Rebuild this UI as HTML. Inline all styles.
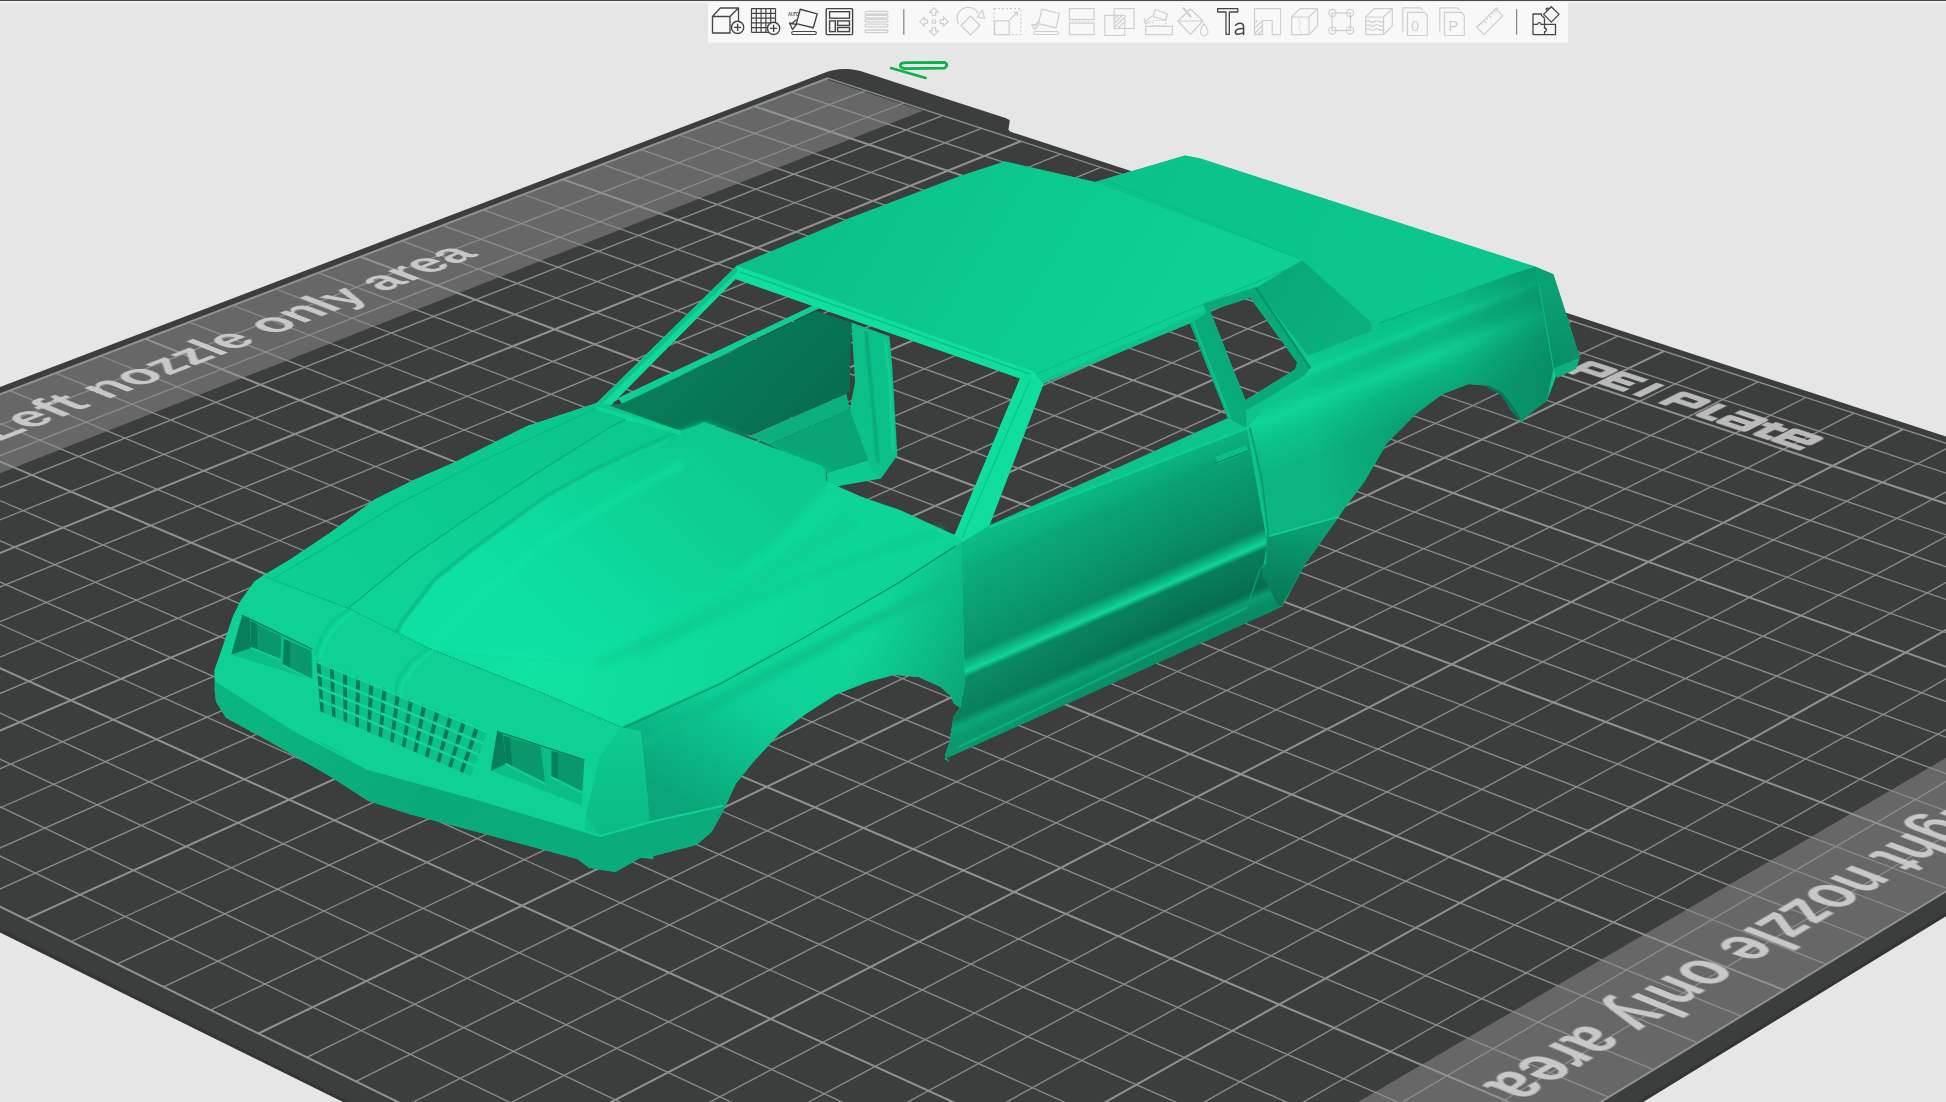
<!DOCTYPE html>
<html><head><meta charset="utf-8"><style>
html,body{margin:0;padding:0;width:1946px;height:1102px;overflow:hidden;background:#e6e6e6;font-family:"Liberation Sans",sans-serif;}
.abs{position:absolute;left:0;top:0;}
#topline{position:absolute;left:0;top:0;width:1946px;height:1px;background:#434b4d;}
#topline2{position:absolute;left:0;top:1px;width:1946px;height:2px;background:#f2f2f2;}
svg{position:absolute;left:0;top:0;}
.m{stroke:#8a8f8c;stroke-width:1.3;}
.M{stroke:#8f9491;stroke-width:2.0;}
#flat{position:absolute;left:0;top:0;width:1400.0px;height:1280.0px;transform-origin:0 0;transform:matrix3d(0.83657691,0.29716519,0,-0.0001253862,-1.02379055,0.33644074,0,-0.0001385146,0,0,1,0,827.867491,78.219669,0,1.00000000);}
.ptxt{position:absolute;color:#c9c9c9;white-space:nowrap;font-family:"Liberation Sans",sans-serif;}
</style></head><body>
<svg width="1946" height="1102" viewBox="0 0 1946 1102">
<polygon points="2452.9,601.5 1063.0,1454.4 -619.0,622.8" fill="#343535" stroke="#343535" stroke-width="2" stroke-linejoin="round" transform="translate(0,2.5)"/><polygon points="827.2,71.8 830.7,70.7 834.7,69.9 839.1,69.3 843.7,69.0 848.2,69.1 852.7,69.5 856.8,70.2 860.4,71.1 1005.5,118.1 1009.5,120.0 1009.7,121.6 1008.4,129.5 1009.7,131.3 1014.1,133.0 2452.9,601.5 1063.0,1454.4 -619.0,622.8" fill="#3c3d3d"/><polygon points="826.8,79.4 922.9,110.8 -490.5,665.7 -585.5,619.1" fill="#676767"/><polygon points="2291.1,555.9 2424.7,599.5 1065.7,1428.2 921.5,1357.4" fill="#676767"/>
</svg>
<svg width="1946" height="1102" viewBox="0 0 1946 1102">
<line x1="827.9" y1="78.2" x2="-586.6" y2="618.5" class="M"/><line x1="865.7" y1="90.6" x2="-549.3" y2="636.9" class="m"/><line x1="903.9" y1="103.0" x2="-511.5" y2="655.4" class="m"/><line x1="942.4" y1="115.6" x2="-473.2" y2="674.2" class="m"/><line x1="981.4" y1="128.3" x2="-434.5" y2="693.2" class="m"/><line x1="1020.8" y1="141.2" x2="-395.3" y2="712.5" class="M"/><line x1="1060.6" y1="154.2" x2="-355.5" y2="732.0" class="m"/><line x1="1100.8" y1="167.3" x2="-315.3" y2="751.7" class="m"/><line x1="1141.4" y1="180.6" x2="-274.6" y2="771.8" class="m"/><line x1="1182.4" y1="194.0" x2="-233.3" y2="792.0" class="m"/><line x1="1223.9" y1="207.5" x2="-191.5" y2="812.5" class="M"/><line x1="1265.8" y1="221.2" x2="-149.2" y2="833.3" class="m"/><line x1="1308.2" y1="235.0" x2="-106.3" y2="854.4" class="m"/><line x1="1351.0" y1="249.0" x2="-62.8" y2="875.8" class="m"/><line x1="1394.2" y1="263.1" x2="-18.7" y2="897.4" class="m"/><line x1="1438.0" y1="277.4" x2="25.9" y2="919.3" class="M"/><line x1="1482.2" y1="291.8" x2="71.1" y2="941.5" class="m"/><line x1="1526.9" y1="306.4" x2="117.0" y2="964.1" class="m"/><line x1="1572.1" y1="321.2" x2="163.5" y2="986.9" class="m"/><line x1="1617.8" y1="336.1" x2="210.6" y2="1010.0" class="m"/><line x1="1664.0" y1="351.2" x2="258.4" y2="1033.5" class="M"/><line x1="1710.8" y1="366.4" x2="306.9" y2="1057.3" class="m"/><line x1="1758.0" y1="381.9" x2="356.0" y2="1081.4" class="m"/><line x1="1805.8" y1="397.5" x2="405.8" y2="1105.9" class="m"/><line x1="1854.2" y1="413.2" x2="456.4" y2="1130.7" class="m"/><line x1="1903.1" y1="429.2" x2="507.7" y2="1155.9" class="M"/><line x1="1952.5" y1="445.3" x2="559.7" y2="1181.4" class="m"/><line x1="2002.5" y1="461.7" x2="612.4" y2="1207.4" class="m"/><line x1="2053.2" y1="478.2" x2="666.0" y2="1233.7" class="m"/><line x1="2104.4" y1="494.9" x2="720.3" y2="1260.3" class="m"/><line x1="2156.2" y1="511.8" x2="775.5" y2="1287.4" class="M"/><line x1="2208.6" y1="528.9" x2="831.5" y2="1314.9" class="m"/><line x1="2261.7" y1="546.3" x2="888.3" y2="1342.8" class="m"/><line x1="2315.4" y1="563.8" x2="946.0" y2="1371.2" class="m"/><line x1="2369.7" y1="581.5" x2="1004.6" y2="1399.9" class="m"/><line x1="2424.7" y1="599.5" x2="1064.1" y2="1429.2" class="M"/><line x1="827.9" y1="78.2" x2="2424.7" y2="599.5" class="m"/><line x1="791.3" y1="92.2" x2="2391.1" y2="620.0" class="m"/><line x1="754.3" y1="106.3" x2="2357.0" y2="640.7" class="M"/><line x1="716.9" y1="120.6" x2="2322.5" y2="661.8" class="m"/><line x1="679.1" y1="135.0" x2="2287.5" y2="683.1" class="m"/><line x1="640.9" y1="149.7" x2="2252.0" y2="704.8" class="m"/><line x1="602.2" y1="164.4" x2="2216.0" y2="726.7" class="m"/><line x1="563.0" y1="179.4" x2="2179.5" y2="749.0" class="M"/><line x1="523.5" y1="194.5" x2="2142.5" y2="771.5" class="m"/><line x1="483.4" y1="209.8" x2="2105.0" y2="794.4" class="m"/><line x1="442.9" y1="225.3" x2="2066.9" y2="817.7" class="m"/><line x1="401.9" y1="240.9" x2="2028.3" y2="841.2" class="m"/><line x1="360.4" y1="256.8" x2="1989.1" y2="865.1" class="M"/><line x1="318.4" y1="272.8" x2="1949.3" y2="889.4" class="m"/><line x1="275.9" y1="289.0" x2="1908.9" y2="914.0" class="m"/><line x1="233.0" y1="305.5" x2="1867.9" y2="939.0" class="m"/><line x1="189.4" y1="322.1" x2="1826.4" y2="964.3" class="m"/><line x1="145.4" y1="338.9" x2="1784.1" y2="990.1" class="M"/><line x1="100.8" y1="356.0" x2="1741.3" y2="1016.2" class="m"/><line x1="55.6" y1="373.2" x2="1697.7" y2="1042.8" class="m"/><line x1="9.9" y1="390.7" x2="1653.5" y2="1069.7" class="m"/><line x1="-36.3" y1="408.3" x2="1608.6" y2="1097.1" class="m"/><line x1="-83.2" y1="426.2" x2="1563.0" y2="1124.9" class="M"/><line x1="-130.7" y1="444.4" x2="1516.7" y2="1153.2" class="m"/><line x1="-178.7" y1="462.7" x2="1469.6" y2="1181.9" class="m"/><line x1="-227.4" y1="481.3" x2="1421.8" y2="1211.0" class="m"/><line x1="-276.7" y1="500.2" x2="1373.2" y2="1240.7" class="m"/><line x1="-326.7" y1="519.3" x2="1323.8" y2="1270.8" class="M"/><line x1="-377.3" y1="538.6" x2="1273.6" y2="1301.4" class="m"/><line x1="-428.6" y1="558.2" x2="1222.5" y2="1332.5" class="m"/><line x1="-480.6" y1="578.0" x2="1170.6" y2="1364.2" class="m"/><line x1="-533.2" y1="598.1" x2="1117.8" y2="1396.4" class="m"/><line x1="-586.6" y1="618.5" x2="1064.1" y2="1429.2" class="M"/>
</svg>
<div id="flat"><svg width="1400" height="1280" style="position:absolute;left:0;top:0;overflow:visible">
<text transform="translate(61.2,860.8) rotate(-90) scale(0.887,1)" font-size="50.4" font-weight="bold" fill="#c8c8c8" font-family="Liberation Sans">Left nozzle only area</text>
<text transform="translate(1340.8000000000002,403.6) rotate(90) scale(0.887,1)" font-size="50.4" font-weight="bold" fill="#c8c8c8" font-family="Liberation Sans">Right nozzle only area</text>
<path d="M775.00,74.00 L775.00,49.80 L793.80,49.80 L793.80,62.00 L775.00,62.00 M822.00,49.80 L802.20,49.80 L802.20,71.00 L822.00,71.00 M802.20,60.40 L819.20,60.40 M832.60,74.00 L832.60,46.80 M854.20,74.00 L854.20,49.80 L873.00,49.80 L873.00,62.00 L854.20,62.00 M885.00,46.80 L885.00,71.00 L896.80,71.00 M899.60,49.80 L920.60,49.80 L920.60,71.00 L901.80,71.00 L901.80,60.40 L920.60,60.40 M932.80,46.80 L932.80,71.00 L943.60,71.00 M924.80,54.00 L942.80,54.00 M969.20,71.00 L947.40,71.00 L947.40,49.80 L966.20,49.80 L966.20,60.40 L947.40,60.40" fill="none" stroke="#bababa" stroke-width="7.00" stroke-linejoin="round" stroke-linecap="butt"/>
</svg>
</div>
<svg width="1946" height="1102" viewBox="0 0 1946 1102">
<defs><filter id="b1" x="-20%" y="-20%" width="140%" height="140%"><feGaussianBlur stdDeviation="1.2"/></filter><filter id="b3" x="-20%" y="-20%" width="140%" height="140%"><feGaussianBlur stdDeviation="3"/></filter><filter id="b6" x="-30%" y="-30%" width="160%" height="160%"><feGaussianBlur stdDeviation="6"/></filter><linearGradient id="gint" gradientUnits="userSpaceOnUse" x1="700" y1="330" x2="800" y2="430"><stop offset="0" stop-color="#077d58"/><stop offset="1" stop-color="#076e4f"/></linearGradient><linearGradient id="groof" gradientUnits="userSpaceOnUse" x1="820" y1="190" x2="1120" y2="380"><stop offset="0" stop-color="#0bc189"/><stop offset="0.5" stop-color="#0cc98d"/><stop offset="1" stop-color="#0dd092"/></linearGradient><linearGradient id="gtrunk" gradientUnits="userSpaceOnUse" x1="1150" y1="170" x2="1450" y2="300"><stop offset="0" stop-color="#0bc28a"/><stop offset="1" stop-color="#0cc78d"/></linearGradient><linearGradient id="gsail" gradientUnits="userSpaceOnUse" x1="1280" y1="280" x2="1360" y2="340"><stop offset="0" stop-color="#0aa97a"/><stop offset="1" stop-color="#0bb07e"/></linearGradient><linearGradient id="grq" gradientUnits="userSpaceOnUse" x1="1394.6" y1="322" x2="1430.7" y2="415.3"><stop offset="0" stop-color="#0bbf88"/><stop offset="0.1" stop-color="#0bc58b"/><stop offset="0.15" stop-color="#0ecf94"/><stop offset="0.22" stop-color="#0bb984"/><stop offset="0.3" stop-color="#0bb782"/><stop offset="0.45" stop-color="#0ed094"/><stop offset="0.65" stop-color="#0bb481"/><stop offset="1" stop-color="#0a9f72"/></linearGradient><linearGradient id="grqh" gradientUnits="userSpaceOnUse" x1="1300" y1="380" x2="1550" y2="330"><stop offset="0" stop-color="#10dc9d" stop-opacity="0.35"/><stop offset="0.45" stop-color="#0cc48b" stop-opacity="0"/><stop offset="0.7" stop-color="#077a56" stop-opacity="0.15"/><stop offset="1" stop-color="#077a56" stop-opacity="0.55"/></linearGradient><linearGradient id="grend" gradientUnits="userSpaceOnUse" x1="1550" y1="280" x2="1560" y2="370"><stop offset="0" stop-color="#0aa275"/><stop offset="1" stop-color="#098e65"/></linearGradient><linearGradient id="gql" gradientUnits="userSpaceOnUse" x1="1290" y1="525" x2="1280" y2="605"><stop offset="0" stop-color="#0a9f72"/><stop offset="1" stop-color="#087553"/></linearGradient><linearGradient id="gdoor" gradientUnits="userSpaceOnUse" x1="1100" y1="481" x2="1171" y2="646"><stop offset="0" stop-color="#0bb682"/><stop offset="0.1" stop-color="#0aae7c"/><stop offset="0.16" stop-color="#0aa275"/><stop offset="0.4" stop-color="#09936a"/><stop offset="0.6" stop-color="#08845e"/><stop offset="0.645" stop-color="#0ab27f"/><stop offset="0.68" stop-color="#10d598"/><stop offset="0.71" stop-color="#087e59"/><stop offset="0.9" stop-color="#076e4f"/><stop offset="0.945" stop-color="#0a9d70"/><stop offset="1" stop-color="#088c63"/></linearGradient><linearGradient id="gdoorh" gradientUnits="userSpaceOnUse" x1="960" y1="600" x2="1180" y2="600"><stop offset="0" stop-color="#10d89b" stop-opacity="0.18"/><stop offset="1" stop-color="#10d89b" stop-opacity="0"/></linearGradient><linearGradient id="ghood" gradientUnits="userSpaceOnUse" x1="380" y1="480" x2="900" y2="600"><stop offset="0" stop-color="#0ed498"/><stop offset="0.35" stop-color="#10e2a2"/><stop offset="0.7" stop-color="#0ed99b"/><stop offset="1" stop-color="#0dd396"/></linearGradient><linearGradient id="gfl" gradientUnits="userSpaceOnUse" x1="300" y1="590" x2="600" y2="420"><stop offset="0" stop-color="#0dcf93"/><stop offset="1" stop-color="#0bc68c"/></linearGradient><linearGradient id="gstrip" gradientUnits="userSpaceOnUse" x1="380" y1="600" x2="640" y2="440"><stop offset="0" stop-color="#0ed397"/><stop offset="1" stop-color="#0cc98e"/></linearGradient><linearGradient id="gbul" gradientUnits="userSpaceOnUse" x1="760" y1="440" x2="560" y2="660"><stop offset="0" stop-color="#0cc98e"/><stop offset="0.35" stop-color="#0dcf93"/><stop offset="0.75" stop-color="#0fdc9e"/><stop offset="1" stop-color="#10e1a1"/></linearGradient><linearGradient id="gfend" gradientUnits="userSpaceOnUse" x1="810" y1="620" x2="700" y2="810"><stop offset="0" stop-color="#0ed699"/><stop offset="0.45" stop-color="#0dd096"/><stop offset="1" stop-color="#0aa679"/></linearGradient><linearGradient id="gfendh" gradientUnits="userSpaceOnUse" x1="860" y1="640" x2="965" y2="690"><stop offset="0" stop-color="#0a9f72" stop-opacity="0"/><stop offset="1" stop-color="#0a9f72" stop-opacity="0.85"/></linearGradient><linearGradient id="gcorner" gradientUnits="userSpaceOnUse" x1="620" y1="730" x2="630" y2="860"><stop offset="0" stop-color="#0dcb90"/><stop offset="1" stop-color="#0bb682"/></linearGradient><linearGradient id="gbump" gradientUnits="userSpaceOnUse" x1="260" y1="720" x2="600" y2="860"><stop offset="0" stop-color="#0bb480"/><stop offset="0.5" stop-color="#0aa97a"/><stop offset="1" stop-color="#0aac7c"/></linearGradient></defs><path d="M736.8,265.8 L850.0,218.0 L961.8,175.6 L1005.0,161.6 L1095.0,182.0 L1185.0,155.4 L1200.4,158.5 L1535.5,266.8 L1553.4,274.3 L1566.7,315.5 L1579.8,358.0 L1556.9,374.3 L1547.1,400.5 L1534.0,410.3 L1521.0,421.7 L1511.2,410.3 L1501.4,394.0 L1488.3,385.8 L1468.7,384.1 L1442.5,394.0 L1416.4,413.5 L1387.0,443.0 L1364.1,482.1 L1344.5,508.3 L1338.0,518.1 L1305.3,563.8 L1282.5,606.3 L944.5,759.0 L949.3,762.0 L944.9,755.4 L949.3,742.4 L953.6,716.2 L960.1,707.5 L953.6,703.2 L951.4,696.6 L940.5,686.8 L918.8,677.0 L894.8,674.8 L868.7,681.4 L836.0,694.4 L805.5,714.0 L779.4,733.6 L753.2,762.0 L735.8,783.7 L722.8,812.0 L711.9,831.6 L696.6,844.7 L655.2,855.6 L640.0,857.8 L615.2,872.1 L589.0,867.8 L577.5,859.0 L470.0,830.0 L410.0,814.3 L368.0,800.7 L330.0,776.2 L270.0,741.8 L226.0,717.8 L216.0,701.8 L214.7,690.0 L214.5,670.3 L221.8,649.6 L232.7,616.9 L240.8,600.6 L254.5,581.5 L262.6,576.0 L289.9,559.7 L330.7,532.5 L374.3,499.8 L412.4,480.7 L456.0,461.7 L526.8,426.3 L597.0,403.0 Z M735.6,279.0 L1020.0,378.4 L954.7,534.9 L611.8,404.3 Z M1043.7,383.8 L1190.0,323.6 L1227.7,418.0 L989.5,525.3 L1037.8,390.9 Z M1210.0,310.7 L1250.2,297.7 L1297.3,362.6 L1295.0,369.6 L1245.4,400.3 Z" fill="#0cc48c" fill-rule="evenodd"/>
<path d="M618.0,398.0 L816.0,304.0 L824.0,306.0 L622.0,404.0 Z" fill="#0dcf93" />
<path d="M636.0,396.0 L780.0,330.0 L784.0,333.0 L640.0,400.0 Z" fill="#0cc58c" />
<path d="M609.6,405.4 L624.0,403.0 L816.0,311.0 L851.3,322.6 L849.7,392.0 L747.7,435.8 L705.0,422.6 L680.3,430.8 Z" fill="url(#gint)" />
<path d="M749.4,435.8 L846.4,393.8 L849.7,409.5 L769.0,444.8 Z" fill="#0bb07e" />
<path d="M769.0,444.8 L849.7,409.5 L872.7,458.8 L826.7,473.0 Z" fill="#0aa577" />
<path d="M826.7,473.0 L872.7,458.8 L881.0,478.5 L828.0,488.0 Z" fill="#0ccb90" />
<path d="M851.3,322.6 L889.4,336.2 L892.0,363.0 L897.4,455.5 L881.0,478.5 L872.0,470.0 L849.7,409.5 L855.0,382.0 Z" fill="#0cc08a" />
<path d="M866.0,332.0 L872.0,395.0 L878.0,462.0" fill="none" stroke="#0a9c70" stroke-width="2.2" stroke-linejoin="round" stroke-linecap="round" filter="url(#b1)"/>
<path d="M885.0,340.0 L890.0,380.0 L893.0,450.0" fill="none" stroke="#10da9c" stroke-width="2" stroke-linejoin="round" stroke-linecap="round" filter="url(#b1)"/>
<path d="M736.8,265.8 L850.0,218.0 L961.8,175.6 L1005.0,161.6 L1095.0,182.0 L1302.2,260.2 L1256.0,288.0 L1043.0,380.0 L1033.7,371.6 Z" fill="url(#groof)" />
<path d="M736.8,265.8 L1033.7,371.6 L1020.0,378.4 L735.6,279.0 Z" fill="#10de9f" />
<path d="M740.0,272.0 L1030.0,374.0" fill="none" stroke="#0bb883" stroke-width="1.2" stroke-linejoin="round" stroke-linecap="round" />
<path d="M1036.0,374.0 L1300.0,264.0" fill="none" stroke="#0bbd87" stroke-width="1.3" stroke-linejoin="round" stroke-linecap="round" />
<path d="M1095.0,182.0 L1185.0,155.4 L1200.4,158.5 L1535.5,266.8 L1516.1,272.8 L1377.5,324.2 L1302.2,260.2 Z" fill="url(#gtrunk)" />
<path d="M1105.0,180.0 L1300.0,259.0" fill="none" stroke="#0bb480" stroke-width="1.0" stroke-linejoin="round" stroke-linecap="round" stroke-dasharray="2,1.5"/>
<path d="M1380.0,323.0 L1516.0,273.0" fill="none" stroke="#0a9f72" stroke-width="1.2" stroke-linejoin="round" stroke-linecap="round" />
<path d="M1302.2,260.2 L1370.7,322.0 L1372.0,331.0 L1308.3,355.8 L1256.0,288.0 Z" fill="url(#gsail)" />
<path d="M1246.8,428.0 L1297.0,369.6 L1308.3,355.8 L1372.0,331.0 L1377.5,324.2 L1516.1,272.8 L1535.5,266.8 L1538.5,281.7 L1553.4,368.2 L1547.1,400.5 L1534.0,410.3 L1521.0,421.7 L1511.2,410.3 L1501.4,394.0 L1488.3,385.8 L1468.7,384.1 L1442.5,394.0 L1416.4,413.5 L1387.0,443.0 L1364.1,482.1 L1344.5,508.3 L1337.8,516.9 L1267.9,535.0 L1251.0,429.0 Z" fill="url(#grq)" />
<path d="M1246.8,428.0 L1297.0,369.6 L1308.3,355.8 L1372.0,331.0 L1377.5,324.2 L1516.1,272.8 L1535.5,266.8 L1538.5,281.7 L1553.4,368.2 L1547.1,400.5 L1534.0,410.3 L1521.0,421.7 L1511.2,410.3 L1501.4,394.0 L1488.3,385.8 L1468.7,384.1 L1442.5,394.0 L1416.4,413.5 L1387.0,443.0 L1364.1,482.1 L1344.5,508.3 L1337.8,516.9 L1267.9,535.0 L1251.0,429.0 Z" fill="url(#grqh)" />
<path d="M1535.5,266.8 L1553.4,274.3 L1566.7,315.5 L1579.8,358.0 L1575.0,368.0 L1556.9,374.3 L1553.4,368.2 L1538.5,281.7 Z" fill="url(#grend)" />
<path d="M1538.5,281.7 L1553.4,368.2" fill="none" stroke="#0bb783" stroke-width="1.2" stroke-linejoin="round" stroke-linecap="round" />
<path d="M1553.4,368.2 L1579.8,358.0 L1576.0,369.0 L1557.0,378.0 Z" fill="#0bb07e" />
<path d="M1488.0,386.5 L1501.0,393.5 L1511.0,406.0 L1519.0,418.0" fill="none" stroke="#087753" stroke-width="3" stroke-linejoin="round" stroke-linecap="round" />
<path d="M1267.9,535.0 L1337.8,516.9 L1344.5,508.3 L1338.0,518.1 L1311.9,553.8 L1305.3,563.8 L1284.0,601.8 L1282.5,606.3 L1246.0,609.8 L1260.0,569.8 L1266.0,563.8 Z" fill="url(#gql)" />
<path d="M1269.0,536.0 L1338.0,517.0" fill="none" stroke="#0fd195" stroke-width="1.8" stroke-linejoin="round" stroke-linecap="round" />
<path d="M961.0,542.0 L989.5,526.1 L1246.8,428.0 L1267.0,542.0 L1262.0,575.0 L1279.5,607.8 L944.5,759.0 L949.3,742.4 L953.6,716.2 L960.1,707.5 L964.9,681.3 Z" fill="url(#gdoor)" />
<path d="M961.0,542.0 L989.5,526.1 L1246.8,428.0 L1267.0,542.0 L1262.0,575.0 L1279.5,607.8 L944.5,759.0 L949.3,742.4 L953.6,716.2 L960.1,707.5 L964.9,681.3 Z" fill="url(#gdoorh)" />
<path d="M990.0,527.0 L1248.0,428.0" fill="none" stroke="#0dcf93" stroke-width="2.4" stroke-linejoin="round" stroke-linecap="round" />
<path d="M1250.0,428.0 L1262.0,480.0 L1267.9,530.0 L1266.0,563.8 L1260.0,569.8 L1246.0,609.8" fill="none" stroke="#0a9a6e" stroke-width="1.6" stroke-linejoin="round" stroke-linecap="round" />
<path d="M959.0,747.0 L1246.0,608.0" fill="none" stroke="#0bb07e" stroke-width="2" stroke-linejoin="round" stroke-linecap="round" />
<path d="M1215.0,457.0 L1246.0,445.0 L1249.0,452.0 L1218.0,464.0 Z" fill="#0bbd87" />
<path d="M1216.0,463.0 L1248.0,451.0" fill="none" stroke="#087f5b" stroke-width="1.2" stroke-linejoin="round" stroke-linecap="round" />
<path d="M597.0,403.0 L640.0,420.0 L677.0,436.0 L704.0,422.0 L822.0,466.0 L826.0,481.0 L962.5,542.0 L900.0,580.0 L800.0,636.0 L720.0,682.0 L621.3,727.1 L536.8,690.7 L470.0,663.9 L427.7,647.9 L349.8,609.0 L293.9,590.0 L262.6,576.0 L289.9,559.7 L330.7,532.5 L374.3,499.8 L412.4,480.7 L456.0,461.7 L526.8,426.3 Z" fill="url(#ghood)" />
<path d="M262.6,576.0 L289.9,559.7 L330.7,532.5 L374.3,499.8 L412.4,480.7 L456.0,461.7 L526.8,426.3 L597.0,403.0 L625.0,413.0 L625.0,420.0 L609.8,427.6 L546.2,467.0 L470.0,516.6 L412.4,556.0 L347.1,609.1 L293.9,590.0 Z" fill="url(#gfl)" />
<path d="M347.1,609.1 L412.4,556.0 L470.0,516.6 L546.2,467.0 L609.8,427.6 L625.0,420.0 L680.3,430.8 L680.3,430.8 L630.0,453.0 L597.1,468.3 L546.2,496.2 L470.0,551.0 L434.2,580.0 L401.6,622.0 L395.0,636.0 Z" fill="url(#gstrip)" />
<path d="M273.0,578.6 L330.0,545.0 L400.0,503.0 L480.0,462.0 L595.0,408.7" fill="none" stroke="#0bb682" stroke-width="1.1" stroke-linejoin="round" stroke-linecap="round" />
<path d="M347.1,609.1 L412.4,556.0 L470.0,516.6 L546.2,467.0 L609.8,427.6 L625.0,420.0" fill="none" stroke="#0aa97a" stroke-width="1.1" stroke-linejoin="round" stroke-linecap="round" />
<path d="M680.3,430.8 L705.0,422.6 L825.0,468.7 L826.7,485.1 L790.0,530.0 L720.0,585.0 L640.0,630.0 L560.0,660.0 L430.0,650.0 L395.0,636.0 L401.6,622.0 L434.2,580.0 L470.0,551.0 L546.2,496.2 L597.1,468.3 L630.0,453.0 Z" fill="url(#gbul)" filter="url(#b3)"/>
<path d="M680.3,430.8 L705.0,422.6 L825.0,468.7 L826.7,485.1 L800.0,490.0 L700.0,448.0 L660.0,448.0 Z" fill="#0cc98e" />
<path d="M395.0,636.0 L401.6,622.0 L434.2,580.0 L470.0,551.0 L546.2,496.2 L597.1,468.3 L630.0,453.0 L680.3,430.8" fill="none" stroke="#0ab583" stroke-width="3" stroke-linejoin="round" stroke-linecap="round" filter="url(#b1)"/>
<path d="M420.0,662.0 L470.0,604.0 L540.0,545.0 L610.0,503.0 L680.0,465.0" fill="none" stroke="#11e4a4" stroke-width="9" stroke-linejoin="round" stroke-linecap="round" opacity="0.5" filter="url(#b3)"/>
<path d="M850.0,520.0 L760.0,580.0 L640.0,650.0" fill="none" stroke="#0cc48b" stroke-width="14" stroke-linejoin="round" stroke-linecap="round" opacity="0.5" filter="url(#b6)"/>
<path d="M621.3,727.1 L720.0,682.0 L800.0,636.0 L900.0,580.0 L962.5,542.0 L961.0,542.0 L964.9,681.3 L960.1,707.5 L953.6,703.2 L951.4,696.6 L940.5,686.8 L918.8,677.0 L894.8,674.8 L868.7,681.4 L836.0,694.4 L805.5,714.0 L779.4,733.6 L753.2,762.0 L735.8,783.7 L722.8,812.0 L711.9,831.6 L696.6,844.7 L655.2,855.6 L640.0,857.8 L615.2,872.1 L599.6,835.0 L586.0,814.0 L599.6,757.6 Z" fill="url(#gfend)" />
<path d="M900.0,580.0 L962.5,542.0 L961.0,542.0 L964.9,681.3 L960.1,707.5 L953.6,703.2 L951.4,696.6 L940.5,686.8 L918.8,677.0 L894.8,674.8 L868.7,681.4 L836.0,694.4 L840.0,620.0 Z" fill="url(#gfendh)" />
<path d="M636.0,748.0 L740.0,690.0 L860.0,626.0 L962.0,578.0" fill="none" stroke="#0bb985" stroke-width="8" stroke-linejoin="round" stroke-linecap="round" opacity="0.8" filter="url(#b3)"/>
<path d="M624.0,727.7 L720.0,684.0 L800.0,640.0 L900.0,582.0 L955.4,546.0" fill="none" stroke="#098f66" stroke-width="1.2" stroke-linejoin="round" stroke-linecap="round" />
<path d="M600.0,662.0 L700.0,622.0 L840.0,564.0 L940.0,530.0" fill="none" stroke="#0cc48b" stroke-width="8" stroke-linejoin="round" stroke-linecap="round" opacity="0.45" filter="url(#b3)"/>
<path d="M641.4,731.3 L648.0,800.0 L653.0,859.0" fill="none" stroke="#0aa476" stroke-width="1.3" stroke-linejoin="round" stroke-linecap="round" />
<path d="M262.6,576.0 L293.9,590.0 L349.8,609.0 L427.7,647.9 L470.0,663.9 L536.8,690.7 L621.3,727.1 L599.6,757.6 L586.5,814.2 L584.3,831.6 L470.0,797.0 L410.0,781.0 L368.0,769.0 L330.0,747.0 L290.0,728.0 L250.0,703.0 L215.0,680.0 L214.5,670.3 L221.8,649.6 L232.7,616.9 L240.8,600.6 L254.5,581.5 Z" fill="#0fd195" />
<path d="M621.3,727.1 L641.4,731.3 L648.0,800.0 L653.0,859.0 L640.0,857.8 L615.2,872.1 L599.6,835.0 L586.0,814.0 L599.6,757.6 Z" fill="url(#gcorner)" />
<path d="M349.8,609.0 L333.0,620.0 L321.8,635.9 L315.0,655.0" fill="none" stroke="#0bb984" stroke-width="1.4" stroke-linejoin="round" stroke-linecap="round" filter="url(#b1)"/>
<path d="M353.0,612.0 L337.0,625.0 L326.0,640.0 L320.0,657.0" fill="none" stroke="#12e3a3" stroke-width="1.6" stroke-linejoin="round" stroke-linecap="round" filter="url(#b1)"/>
<path d="M427.7,647.9 L410.0,662.0 L397.7,679.9 L393.7,701.8" fill="none" stroke="#0bb984" stroke-width="1.4" stroke-linejoin="round" stroke-linecap="round" filter="url(#b1)"/>
<path d="M432.0,651.0 L415.0,666.0 L403.0,683.0 L399.0,704.0" fill="none" stroke="#12e3a3" stroke-width="1.6" stroke-linejoin="round" stroke-linecap="round" filter="url(#b1)"/>
<path d="M242.2,615.4 L312.1,649.0 L313.0,679.9 L231.3,654.5 Z" fill="#0bbd87" />
<path d="M242.2,615.4 L249.5,618.0 L251.3,648.1 L231.3,654.5 Z" fill="#087f5b" />
<path d="M250.4,620.9 L281.3,636.3 L280.4,659.9 L251.3,648.1 Z" fill="#09976b" />
<path d="M250.4,620.9 L257.0,624.0 L257.5,651.0 L251.3,648.1 Z" fill="#07805a" />
<path d="M284.0,639.0 L311.2,650.8 L312.1,679.9 L283.1,665.4 Z" fill="#09976b" />
<path d="M284.0,639.0 L290.0,641.5 L290.5,668.5 L283.1,665.4 Z" fill="#07805a" />
<path d="M251.3,648.1 L280.4,659.9" fill="none" stroke="#0ecf94" stroke-width="2" stroke-linejoin="round" stroke-linecap="round" />
<path d="M283.1,665.4 L312.1,679.9" fill="none" stroke="#0ecf94" stroke-width="2" stroke-linejoin="round" stroke-linecap="round" />
<path d="M242.2,615.4 L312.1,649.0" fill="none" stroke="#087f5b" stroke-width="1.3" stroke-linejoin="round" stroke-linecap="round" />
<path d="M316.0,660.0 L488.0,731.0 L471.0,776.0 L320.0,711.0 Z" fill="#0cc18a" />
<path d="M316.5,660.2 L320.5,661.9 L321.4,674.6 L317.5,673.0 Z M317.5,673.0 L321.4,674.6 L322.2,687.3 L318.5,685.7 Z M318.5,685.7 L322.2,687.3 L323.1,700.0 L319.5,698.5 Z M319.5,698.5 L323.1,700.0 L323.9,712.7 L320.5,711.2 Z M329.8,665.7 L333.7,667.3 L334.2,679.9 L330.3,678.3 Z M330.3,678.3 L334.2,679.9 L334.6,692.5 L330.9,690.9 Z M330.9,690.9 L334.6,692.5 L335.1,705.1 L331.5,703.6 Z M331.5,703.6 L335.1,705.1 L335.6,717.7 L332.1,716.2 Z M343.0,671.1 L347.0,672.8 L347.0,685.3 L343.2,683.7 Z M343.2,683.7 L347.0,685.3 L347.1,697.7 L343.3,696.2 Z M343.3,696.2 L347.1,697.7 L347.1,710.2 L343.5,708.7 Z M343.5,708.7 L347.1,710.2 L347.2,722.7 L343.7,721.2 Z M356.2,676.6 L360.2,678.2 L359.8,690.6 L356.0,689.0 Z M356.0,689.0 L359.8,690.6 L359.5,703.0 L355.8,701.4 Z M355.8,701.4 L359.5,703.0 L359.1,715.3 L355.5,713.8 Z M355.5,713.8 L359.1,715.3 L358.8,727.7 L355.3,726.2 Z M369.5,682.1 L373.4,683.7 L372.7,696.0 L368.8,694.3 Z M368.8,694.3 L372.7,696.0 L371.9,708.2 L368.2,706.6 Z M368.2,706.6 L371.9,708.2 L371.2,720.5 L367.6,718.9 Z M367.6,718.9 L371.2,720.5 L370.4,732.7 L366.9,731.2 Z M382.7,687.5 L386.7,689.2 L385.5,701.3 L381.6,699.7 Z M381.6,699.7 L385.5,701.3 L384.3,713.4 L380.6,711.9 Z M380.6,711.9 L384.3,713.4 L383.2,725.6 L379.6,724.0 Z M379.6,724.0 L383.2,725.6 L382.0,737.7 L378.5,736.2 Z M395.9,693.0 L399.9,694.6 L398.3,706.6 L394.5,705.0 Z M394.5,705.0 L398.3,706.6 L396.8,718.7 L393.0,717.1 Z M393.0,717.1 L396.8,718.7 L395.2,730.7 L391.6,729.1 Z M391.6,729.1 L395.2,730.7 L393.6,742.7 L390.2,741.2 Z M409.1,698.4 L413.1,700.1 L411.1,712.0 L407.3,710.4 Z M407.3,710.4 L411.1,712.0 L409.2,723.9 L405.5,722.3 Z M405.5,722.3 L409.2,723.9 L407.2,735.8 L403.6,734.3 Z M403.6,734.3 L407.2,735.8 L405.3,747.7 L401.8,746.2 Z M422.4,703.9 L426.3,705.5 L424.0,717.3 L420.1,715.7 Z M420.1,715.7 L424.0,717.3 L421.6,729.1 L417.9,727.6 Z M417.9,727.6 L421.6,729.1 L419.2,740.9 L415.6,739.4 Z M415.6,739.4 L419.2,740.9 L416.9,752.7 L413.4,751.2 Z M435.6,709.4 L439.6,711.0 L436.8,722.7 L433.0,721.1 Z M433.0,721.1 L436.8,722.7 L434.0,734.4 L430.3,732.8 Z M430.3,732.8 L434.0,734.4 L431.3,746.0 L427.7,744.5 Z M427.7,744.5 L431.3,746.0 L428.5,757.7 L425.0,756.2 Z M448.8,714.8 L452.8,716.5 L449.6,728.0 L445.8,726.4 Z M445.8,726.4 L449.6,728.0 L446.5,739.6 L442.7,738.0 Z M442.7,738.0 L446.5,739.6 L443.3,751.1 L439.7,749.6 Z M439.7,749.6 L443.3,751.1 L440.1,762.7 L436.6,761.2 Z M462.1,720.3 L466.0,721.9 L462.5,733.4 L458.6,731.8 Z M458.6,731.8 L462.5,733.4 L458.9,744.8 L455.2,743.2 Z M455.2,743.2 L458.9,744.8 L455.3,756.3 L451.7,754.7 Z M451.7,754.7 L455.3,756.3 L451.7,767.7 L448.2,766.2 Z M475.3,725.8 L479.3,727.4 L475.3,738.7 L471.4,737.1 Z M471.4,737.1 L475.3,738.7 L471.3,750.0 L467.6,748.5 Z M467.6,748.5 L471.3,750.0 L467.3,761.4 L463.7,759.8 Z M463.7,759.8 L467.3,761.4 L463.3,772.7 L459.8,771.2 Z" fill="#08795a"/>
<path d="M316.5,660.2 L329.2,665.5 L329.4,668.0 L316.7,663.0 Z M317.5,673.0 L329.8,678.1 L329.9,680.6 L317.7,675.8 Z M318.5,685.7 L330.4,690.7 L330.5,693.3 L318.7,688.5 Z M319.5,698.5 L331.0,703.4 L331.1,705.9 L319.7,701.3 Z M329.8,665.7 L342.5,670.9 L342.5,673.4 L329.9,668.5 Z M330.3,678.3 L342.7,683.4 L342.7,685.9 L330.5,681.1 Z M330.9,690.9 L342.8,696.0 L342.9,698.5 L331.0,693.7 Z M331.5,703.6 L343.0,708.5 L343.1,711.0 L331.6,706.3 Z M343.0,671.1 L355.7,676.4 L355.6,678.9 L343.0,673.9 Z M343.2,683.7 L355.5,688.8 L355.4,691.3 L343.2,686.4 Z M343.3,696.2 L355.3,701.2 L355.2,703.7 L343.4,698.9 Z M343.5,708.7 L355.1,713.6 L355.0,716.1 L343.6,711.4 Z M356.2,676.6 L368.9,681.8 L368.8,684.3 L356.2,679.3 Z M356.0,689.0 L368.3,694.1 L368.2,696.6 L355.9,691.7 Z M355.8,701.4 L367.7,706.4 L367.6,708.9 L355.7,704.1 Z M355.5,713.8 L367.1,718.7 L367.0,721.2 L355.5,716.5 Z M369.5,682.1 L382.2,687.3 L382.0,689.7 L369.3,684.8 Z M368.8,694.3 L381.1,699.5 L380.9,701.9 L368.7,697.1 Z M368.2,706.6 L380.1,711.7 L379.9,714.1 L368.1,709.3 Z M367.6,718.9 L379.1,723.8 L378.9,726.3 L367.4,721.6 Z M382.7,687.5 L395.4,692.8 L395.1,695.2 L382.5,690.2 Z M381.6,699.7 L394.0,704.8 L393.7,707.2 L381.4,702.4 Z M380.6,711.9 L392.5,716.9 L392.3,719.3 L380.4,714.5 Z M379.6,724.0 L391.1,728.9 L390.8,731.4 L379.3,726.7 Z M395.9,693.0 L408.6,698.2 L408.2,700.6 L395.6,695.6 Z M394.5,705.0 L406.8,710.2 L406.4,712.6 L394.2,707.7 Z M393.0,717.1 L405.0,722.1 L404.6,724.5 L392.7,719.7 Z M391.6,729.1 L403.1,734.1 L402.8,736.4 L391.3,731.8 Z M409.1,698.4 L421.8,703.7 L421.4,706.1 L408.7,701.1 Z M407.3,710.4 L419.6,715.5 L419.2,717.9 L406.9,713.0 Z M405.5,722.3 L417.4,727.3 L416.9,729.7 L405.1,725.0 Z M403.6,734.3 L415.2,739.2 L414.7,741.5 L403.2,736.9 Z M422.4,703.9 L435.1,709.2 L434.5,711.5 L421.9,706.5 Z M420.1,715.7 L432.4,720.9 L431.9,723.2 L419.6,718.3 Z M417.9,727.6 L429.8,732.6 L429.3,734.9 L417.4,730.2 Z M415.6,739.4 L427.2,744.3 L426.6,746.6 L415.1,742.0 Z M435.6,709.4 L448.3,714.6 L447.7,716.9 L435.0,711.9 Z M433.0,721.1 L445.3,726.2 L444.7,728.5 L432.4,723.7 Z M430.3,732.8 L442.2,737.8 L441.6,740.1 L429.7,735.4 Z M427.7,744.5 L439.2,749.4 L438.6,751.7 L427.1,747.1 Z M448.8,714.8 L461.5,720.1 L460.8,722.4 L448.2,717.4 Z M445.8,726.4 L458.1,731.6 L457.4,733.9 L445.1,729.0 Z M442.7,738.0 L454.7,743.0 L454.0,745.3 L442.1,740.6 Z M439.7,749.6 L451.2,754.5 L450.5,756.8 L439.0,752.2 Z M462.1,720.3 L474.8,725.5 L474.0,727.8 L461.3,722.8 Z M458.6,731.8 L470.9,736.9 L470.2,739.2 L457.8,734.3 Z M455.2,743.2 L467.1,748.3 L466.3,750.5 L454.4,745.8 Z M451.7,754.7 L463.2,759.6 L462.5,761.9 L450.9,757.2 Z M475.3,725.8 L488.0,731.0 L487.1,733.2 L474.4,728.3 Z M471.4,737.1 L483.8,742.2 L482.9,744.5 L470.6,739.6 Z M467.6,748.5 L479.5,753.5 L478.6,755.8 L466.7,751.0 Z M463.7,759.8 L475.2,764.8 L474.4,767.0 L462.9,762.3 Z" fill="#10d99b"/>
<path d="M497.2,731.5 L584.3,759.8 L582.1,805.5 L490.7,770.7 Z" fill="#0bbd87" />
<path d="M497.2,731.5 L503.0,733.5 L505.9,764.1 L490.7,770.7 Z" fill="#087f5b" />
<path d="M503.7,735.8 L540.8,746.7 L545.1,783.7 L505.9,764.1 Z" fill="#09976b" />
<path d="M503.7,735.8 L510.0,737.6 L512.0,767.0 L505.9,764.1 Z" fill="#07805a" />
<path d="M551.6,751.1 L584.3,759.8 L582.1,792.4 L551.6,777.2 Z" fill="#09976b" />
<path d="M551.6,751.1 L558.0,752.8 L558.0,780.4 L551.6,777.2 Z" fill="#07805a" />
<path d="M505.9,764.1 L545.1,783.7" fill="none" stroke="#0ecf94" stroke-width="2.2" stroke-linejoin="round" stroke-linecap="round" />
<path d="M551.6,777.2 L582.1,792.4" fill="none" stroke="#0ecf94" stroke-width="2.2" stroke-linejoin="round" stroke-linecap="round" />
<path d="M497.2,731.5 L584.3,759.8" fill="none" stroke="#087f5b" stroke-width="1.3" stroke-linejoin="round" stroke-linecap="round" />
<path d="M215.0,680.0 L250.0,703.0 L290.0,728.0 L330.0,747.0 L368.0,769.0 L410.0,781.0 L470.0,797.0 L584.3,831.6 L600.0,836.0 L654.5,821.0 L722.0,806.0 L711.9,831.6 L696.6,844.7 L655.2,855.6 L640.0,857.8 L615.2,872.1 L589.0,867.8 L577.5,859.0 L470.0,830.0 L410.0,814.3 L368.0,800.7 L330.0,776.2 L270.0,741.8 L226.0,717.8 L216.0,701.8 L214.7,690.0 Z" fill="url(#gbump)" />
<path d="M216.0,681.0 L290.0,728.0 L368.0,769.0 L470.0,797.0 L584.0,831.0 L600.0,836.0 L654.5,821.0 L722.0,806.0" fill="none" stroke="#0ed196" stroke-width="2" stroke-linejoin="round" stroke-linecap="round" />
<path d="M266.8,577.4 L349.8,609.0 L427.7,647.9 L536.8,690.7 L621.3,727.1" fill="none" stroke="#0aa677" stroke-width="1" stroke-linejoin="round" stroke-linecap="round" stroke-dasharray="1.5,2"/>
<path d="M737.0,265.4 L595.4,404.3 L611.8,404.3 L735.6,279.0 Z" fill="#0fd99b" />
<path d="M737.0,265.4 L597.0,403.0 L602.0,404.0 L737.0,272.0 Z" fill="#0cc38b" />
<path d="M1033.7,371.6 L1043.7,383.8 L989.5,525.3 L962.5,542.0 L954.7,534.9 L1020.0,378.4 Z" fill="#10de9f" />
<path d="M1030.0,380.0 L962.0,538.0" fill="none" stroke="#0cc28a" stroke-width="1.2" stroke-linejoin="round" stroke-linecap="round" />
<path d="M1190.0,323.6 L1210.0,310.7 L1245.4,400.3 L1246.8,428.0 L1227.7,418.0 Z" fill="#0aab7b" />
<path d="M1193.0,322.0 L1230.0,418.0" fill="none" stroke="#0cc68c" stroke-width="2" stroke-linejoin="round" stroke-linecap="round" />
<path d="M1203,304 L1256,287 L1311,367 L1304,376 L1247,410 L1240,402 Z M1210,310.7 L1250.2,297.7 L1297.3,362.6 L1295,369.6 L1245.4,400.3 Z" fill="#0aa97a" fill-rule="evenodd"/>
<path d="M1256.0,288.0 L1310.0,368.0" fill="none" stroke="#098f66" stroke-width="2" stroke-linejoin="round" stroke-linecap="round" />
<path d="M594.8,405.4 L680.3,430.8 L682.0,436.0 L597.0,410.0 Z" fill="#0ed498" />
<path d="M826.7,485.1 L900.0,510.0 L954.7,534.9 L962.5,542.0 L826.0,490.0 Z" fill="#0ed498" />
<path d="M891,68 L925.7,78" stroke="#0db14b" stroke-width="2.6" stroke-linecap="round" fill="none"/>
<path d="M901,63.8 Q903,62.6 907,62.6 L944,62.3 Q949.5,64.6 944.5,68.2 L904,68.6 Q898.5,67 901,63.8 Z" stroke="#0db14b" stroke-width="2.8" fill="none"/>
</svg>
<div id="topline"></div><div id="topline2"></div>
<svg style="position:absolute;left:0;top:0;will-change:transform" width="1946" height="45" viewBox="0 0 1946 45"><rect x="708" y="2" width="860" height="40.5" fill="#f8f8f8"/><g fill="none" stroke="#454545" stroke-width="1.35" stroke-linejoin="round"><path d="M712.5,16.5 H730 V33 H712.5 Z M712.5,16.5 L720.3,8 H738.5 L730,16.5 M738.5,8 V21"/></g><circle cx="737.6" cy="27.4" r="6.1" fill="#f8f8f8" stroke="#454545" stroke-width="1.4"/><path d="M734,27.4 H741.2 M737.6,23.8 V31" stroke="#454545" stroke-width="1.4"/><path d="M751.5,8.6 V32.4 M751.5,8.6 H775.5 M756.3,8.6 V32.4 M751.5,13.4 H775.5 M761.1,8.6 V32.4 M751.5,18.1 H775.5 M765.9,8.6 V32.4 M751.5,22.9 H775.5 M770.7,8.6 V32.4 M751.5,27.6 H775.5 M775.5,8.6 V32.4 M751.5,32.4 H775.5 " stroke="#454545" stroke-width="1.2" fill="none"/><circle cx="773.6" cy="28.4" r="6.1" fill="#f8f8f8" stroke="#454545" stroke-width="1.4"/><path d="M770,28.4 H777.2 M773.6,24.8 V32" stroke="#454545" stroke-width="1.4"/><path d="M800.2,9.3 L817.2,13.9 L813.3,27.7 L796.3,23.6 Z" fill="none" stroke="#454545" stroke-width="1.4" stroke-linejoin="round"/><text x="788.3" y="16.4" font-family="Liberation Sans" font-size="4.6" font-weight="bold" fill="#454545" textLength="10.5" lengthAdjust="spacingAndGlyphs">AUTO</text><path d="M796.5,19.5 L792,23.5 M789.5,23 L792.5,29.5 L796.5,24.5 Z" fill="none" stroke="#454545" stroke-width="1.3" stroke-linejoin="round"/><rect x="791.7" y="31.5" width="24.6" height="3" rx="1.5" fill="none" stroke="#454545" stroke-width="1.2"/><g fill="none" stroke="#454545" stroke-width="1.4"><rect x="826.2" y="8.6" width="26.4" height="26" rx="1"/><rect x="829.6" y="11.7" width="19.9" height="6.5"/><rect x="829.6" y="20.9" width="5.7" height="10.7"/><rect x="837.6" y="20.9" width="11.9" height="4.5"/><rect x="837.6" y="27.5" width="11.9" height="4.1"/></g><g fill="none" stroke="#cfcfcf" stroke-width="1.3"><rect x="865" y="11.4" width="23" height="2.6" rx="1.3"/><rect x="865" y="15.3" width="23" height="2.6" rx="1.3"/><rect x="865" y="19.3" width="23" height="2.6" rx="1.3"/><rect x="865" y="24.2" width="23" height="2.6" rx="1.3"/><rect x="865" y="30" width="23" height="2.6" rx="1.3"/></g><path d="M903.8,9.2 V34.7" stroke="#8a8a8a" stroke-width="1.3"/><g fill="none" stroke="#cfcfcf" stroke-width="1.2" stroke-linejoin="round"><path d="M933.9,7.6 L929.3,12.3 H932.2 V15.5 H935.6 V12.3 H938.5 Z"/><path d="M933.9,35.6 L929.3,30.9 H932.2 V27.7 H935.6 V30.9 H938.5 Z"/><path d="M919.7,21.6 L924.4,17 V19.9 H927.6 V23.3 H924.4 V26.2 Z"/><path d="M948.1,21.6 L943.4,17 V19.9 H940.2 V23.3 H943.4 V26.2 Z"/><rect x="932.3" y="20" width="3.2" height="3.2"/></g><g fill="none" stroke="#cfcfcf" stroke-width="1.2" stroke-linejoin="round"><path d="M958.5,24 A11,11 0 0 1 978,13"/><path d="M982.5,10.2 L977.5,17 L984.5,18.5 Z"/><path d="M970.5,16 L980,25.5 L970.5,35 L961,25.5 Z"/></g><g fill="none" stroke="#cfcfcf" stroke-width="1.2"><rect x="994" y="8.6" width="26.8" height="26" stroke-dasharray="2,2"/><rect x="994.6" y="20.8" width="14.6" height="13.9"/><path d="M1010,19.5 L1017.5,12.3 M1013.5,12.3 H1017.5 V16.3"/></g><g fill="none" stroke="#cfcfcf" stroke-width="1.2" stroke-linejoin="round"><path d="M1041.8,9.2 L1059.4,13.5 L1056,27.8 L1038.6,23.6 Z"/><path d="M1039,21 L1034,26 M1031.5,24.5 L1034.5,29.5 L1038.5,25 Z"/><rect x="1033.9" y="31.5" width="24.7" height="3" rx="1.5"/></g><g fill="none" stroke="#cfcfcf" stroke-width="1.2"><rect x="1069.4" y="8.6" width="24.7" height="10.8"/><rect x="1069.4" y="23.2" width="24.7" height="11.5"/><path d="M1069.4,21.4 H1094.1" stroke-dasharray="1.5,1.5"/></g><g fill="none" stroke="#cfcfcf" stroke-width="1.2"><rect x="1104.8" y="15.4" width="20" height="20"/><rect x="1114.1" y="8.6" width="20" height="19.9"/><path d="M1114.5,19 L1118,15.6 M1114.5,23 L1122,15.6 M1114.5,27 L1124,18 M1118,28 L1124.5,22"/></g><g fill="none" stroke="#cfcfcf" stroke-width="1.2" stroke-linejoin="round"><path d="M1155.2,9.5 L1167.5,14 L1165.5,20.5 L1153,16.5 Z"/><path d="M1152,16 L1145,22 M1144,18 L1145.5,24 L1150.5,21.5"/><rect x="1152.8" y="20.5" width="13" height="5" stroke-dasharray="1.5,1.5"/><rect x="1145.6" y="26.4" width="26.7" height="8.2"/></g><g fill="none" stroke="#cfcfcf" stroke-width="1.2" stroke-linejoin="round"><path d="M1190.5,9 L1203,21 L1190.5,34.5 L1178,21 Z M1178,21 H1203"/><path d="M1183,7.5 L1191,17" stroke-width="2"/><path d="M1204,23.5 Q1208,29 1208,32 A3.7,3.7 0 0 1 1200.5,32 Q1200.5,29 1204,23.5 Z"/></g><path d="M1217.6,8.6 H1237.8 V12 H1229.3 V34.3 H1226 V12 H1217.6 Z" fill="none" stroke="#454545" stroke-width="1.3" stroke-linejoin="round"/><path d="M1235.6,25.3 Q1237.5,23.2 1240.2,23.3 Q1243.6,23.5 1243.6,27 V34.6 M1243.4,28.6 Q1239.6,28.4 1237,29.6 Q1234.6,31 1235.6,33.3 Q1237.6,35.6 1243.4,32.6" fill="none" stroke="#454545" stroke-width="1.5" stroke-linecap="round"/><g fill="none" stroke="#cfcfcf" stroke-width="1.2"><path d="M1254.5,34.7 V8.6 H1280.6 V34.7 H1272.2 V20.5 H1262.5 V34.7 Z"/><path d="M1255,23 L1257.5,20.5 M1255,28 L1262,21 M1255,33 L1262,26 M1258,34.5 L1262,30.5"/></g><g fill="none" stroke="#cfcfcf" stroke-width="1.2" stroke-linejoin="round"><path d="M1291.6,17 H1309 V34.7 H1291.6 Z M1291.6,17 L1300,8.6 H1317.6 L1309,17 M1317.6,8.6 V26 L1309,34.7"/><path d="M1298.5,19 L1300,24 L1299,28 L1301.5,33" stroke-dasharray="1,1"/></g><g fill="none" stroke="#cfcfcf" stroke-width="1.2"><rect x="1332" y="13" width="18.5" height="17.5"/><circle cx="1332.5" cy="13" r="3.6"/><circle cx="1350" cy="13" r="3.6"/><circle cx="1332.5" cy="30.5" r="3.6"/><circle cx="1350" cy="30.5" r="3.6"/></g><g fill="none" stroke="#cfcfcf" stroke-width="1.2" stroke-linejoin="round"><path d="M1365.7,17 H1383.5 V34.7 H1365.7 Z M1365.7,17 L1374,8.6 H1392.3 L1383.5,17 M1392.3,8.6 V26 L1383.5,34.7"/><path d="M1366,21.5 q2.2,-1.5 4.4,0 t4.4,0 t4.4,0 t4.4,0 M1366,25.5 q2.2,-1.5 4.4,0 t4.4,0 t4.4,0 t4.4,0 M1366,29.5 q2.2,-1.5 4.4,0 t4.4,0 t4.4,0 t4.4,0"/></g><g fill="none" stroke="#cfcfcf" stroke-width="1.2" stroke-linejoin="round"><path d="M1402.8,31.5 V7.8 H1420.5 L1422.5,10"/><path d="M1407.5,35.5 V12.3 H1424.5 L1427.3,15.5 V35.5 Z"/></g><text x="1411" y="31.3" font-family="Liberation Sans" font-size="14.5" fill="#cfcfcf">0</text><g fill="none" stroke="#cfcfcf" stroke-width="1.2" stroke-linejoin="round"><path d="M1439.8,31.5 V7.8 H1457.5 L1459.5,10"/><path d="M1444.5,35.5 V12.3 H1461.5 L1464.3,15.5 V35.5 Z"/></g><text x="1448.5" y="31.3" font-family="Liberation Sans" font-size="14.5" fill="#cfcfcf">P</text><g fill="none" stroke="#cfcfcf" stroke-width="1.2" stroke-linejoin="round"><path d="M1476.8,27.3 L1495.6,8.6 L1502.8,15.8 L1484,34.7 Z"/><path d="M1481.0,23.1 l1.6,1.6"/><path d="M1483.6,20.5 l2.6,2.6"/><path d="M1486.2,17.9 l1.6,1.6"/><path d="M1488.8,15.3 l2.6,2.6"/><path d="M1491.4,12.7 l1.6,1.6"/><path d="M1494.0,10.1 l2.6,2.6"/><path d="M1496.6,7.5 l1.6,1.6"/></g><path d="M1516.6,9.2 V34.7" stroke="#8a8a8a" stroke-width="1.3"/><g fill="none" stroke="#454545" stroke-width="1.3" stroke-linejoin="round"><path d="M1533,34.7 V14 H1541.5 Q1541,15.8 1542.6,16.5 Q1544.5,17 1544.5,19.5 V24.3"/><path d="M1533,24.3 H1537.5 Q1538,22.3 1539.6,22.6 Q1541.2,23 1541,24.3 H1555.5 V34.7 H1533"/><path d="M1544.5,24.3 V28 Q1546.5,28.3 1546.3,30 Q1546,31.8 1544.5,31.6 V34.7"/><path d="M1551.3,6.8 L1559,14.4 L1551.3,22.1 L1543.6,14.4 Z M1547.5,10.6 Q1545.8,9.8 1546.4,8.6 Q1547.4,7.6 1549.3,8.7"/></g></svg>
</body></html>
